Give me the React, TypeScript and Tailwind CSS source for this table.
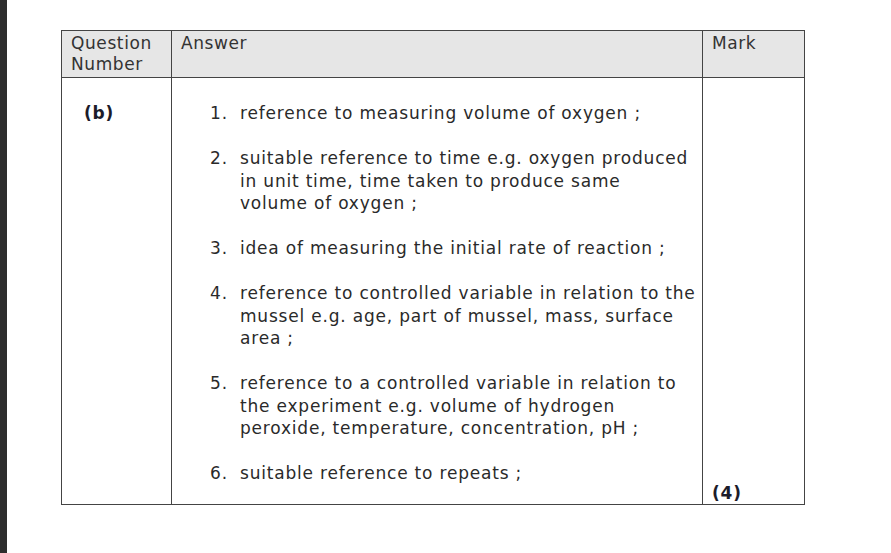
import React from "react";

const items: string[][] = [
  ["reference to measuring volume of oxygen ;"],
  [
    "suitable reference to time e.g. oxygen produced",
    "in unit time, time taken to produce same",
    "volume of oxygen ;",
  ],
  ["idea of measuring the initial rate of reaction ;"],
  [
    "reference to controlled variable in relation to the",
    "mussel e.g. age, part of mussel, mass, surface",
    "area ;",
  ],
  [
    "reference to a controlled variable in relation to",
    "the experiment e.g. volume of hydrogen",
    "peroxide, temperature, concentration, pH ;",
  ],
  ["suitable reference to repeats ;"],
];

export default function App() {
  return (
    <div
      className="flex h-[553px] w-[891px] bg-white text-[#2a2a2a] overflow-hidden"
      style={{ fontFamily: '"DejaVu Sans", Verdana, sans-serif' }}
    >
      <div className="w-[7px] h-full bg-[#2e2e2e]" />
      <div className="pl-[54px] pt-[30px]">
        <div className="grid grid-cols-[110px_531px_101px] w-[744px] border border-[#444] text-[17px]">
          {/* Header */}
          <div className="bg-[#e6e6e6] border-r border-b border-[#444] h-[47px] pl-[9px] pt-[2px] leading-[21px] text-[#333] tracking-[0.6px]">
            <div>Question</div>
            <div>Number</div>
          </div>
          <div className="bg-[#e6e6e6] border-r border-b border-[#444] pl-[9px] pt-[2px] leading-[21px] text-[#333] tracking-[0.6px]">
            Answer
          </div>
          <div className="bg-[#e6e6e6] border-b border-[#444] pl-[9px] pt-[2px] leading-[21px] text-[#333] tracking-[0.6px]">
            Mark
          </div>
          {/* Body */}
          <div className="border-r border-[#444] pl-[22px] pt-[24px] leading-[22px] font-bold text-[#1c1c2a] tracking-[0.8px]">
            (b)
          </div>
          <div className="border-r border-[#444] pl-[38px] pt-[24px] pb-[19px] flex flex-col gap-[22.5px] leading-[22.5px] tracking-[0.8px]">
            {items.map((lines, i) => (
              <div key={i} className="flex">
                <div className="w-[30px] shrink-0">{i + 1}.</div>
                <div className="whitespace-nowrap">
                  {lines.map((l, j) => (
                    <div key={j}>{l}</div>
                  ))}
                </div>
              </div>
            ))}
          </div>
          <div className="flex flex-col justify-end pl-[9px] leading-[22px] font-bold text-[#1c1c2a] tracking-[0.8px]">
            (4)
          </div>
        </div>
      </div>
    </div>
  );
}
